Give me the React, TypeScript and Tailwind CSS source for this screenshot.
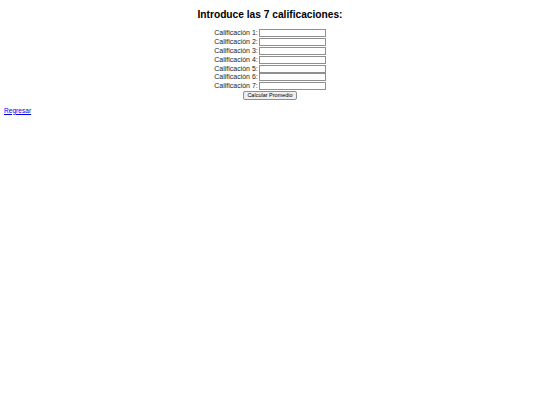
export default function App() {
  const rows = [1, 2, 3, 4, 5, 6, 7];
  return (
    <div className="min-h-[405px] bg-white text-black" style={{ fontFamily: '"Liberation Sans", Arial, sans-serif' }}>
      <h2 className="pt-[8px] text-center text-[10.2px] font-bold leading-[13px]">Introduce las 7 calificaciones:</h2>
      <form className="mt-[8px] flex flex-col items-center">
        {rows.map((n) => (
          <div key={n} className="flex h-[8.8px] items-center">
            <label className="whitespace-nowrap text-right text-[7px] leading-[8px] text-[#222]">Calificación {n}:</label>
            <input className="ml-[1px] h-[8px] w-[67px] border border-[#8f8f8f] bg-white" />
          </div>
        ))}
        <button
          type="button"
          className="h-[9px] rounded-[2px] border border-[#8f8f8f] bg-[#efefef] px-[3px] text-[5.5px] leading-[7px] whitespace-nowrap"
        >
          Calcular Promedio
        </button>
      </form>
      <a href="#" className="mt-[7px] ml-[4px] block w-fit text-[6.6px] leading-[8px] text-[#0000ee] underline">
        Regresar
      </a>
    </div>
  );
}
